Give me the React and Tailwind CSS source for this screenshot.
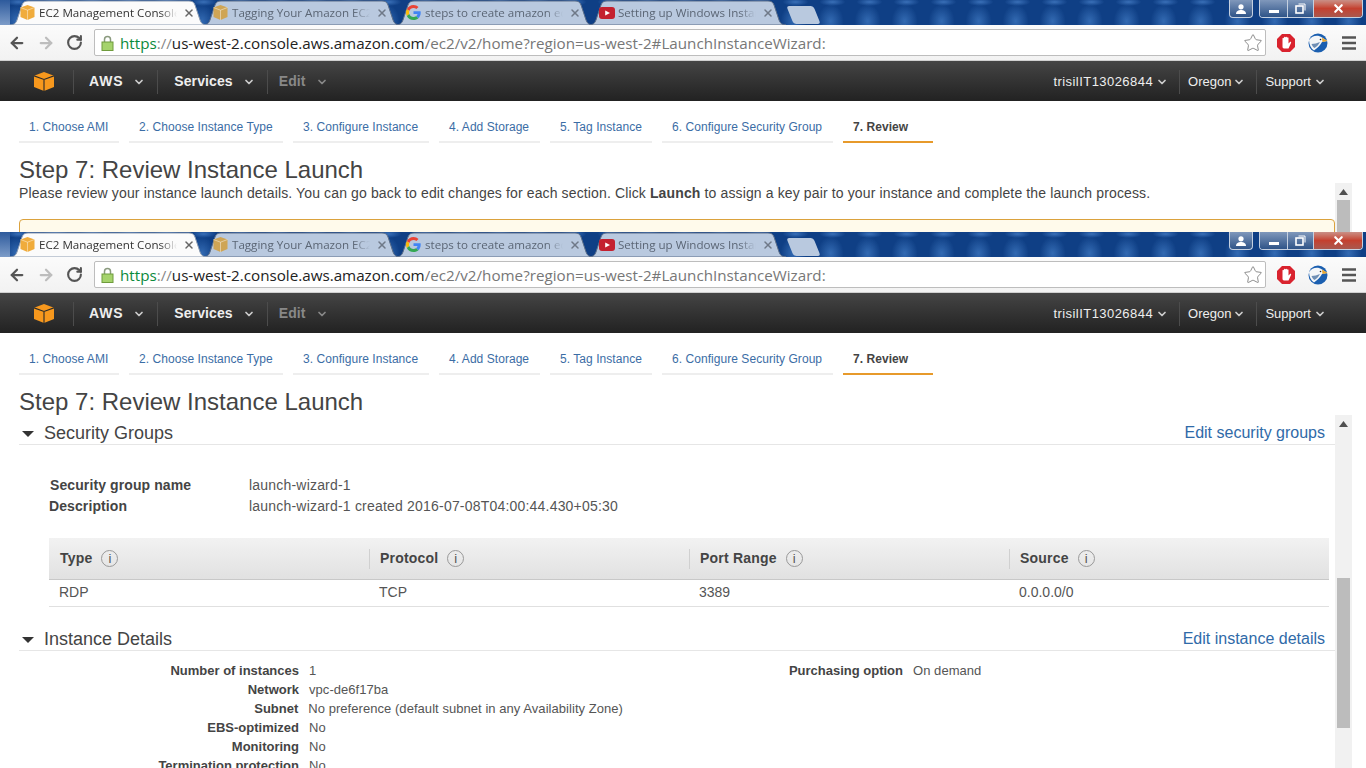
import { ArrowLeft, ArrowRight, RotateCw, Star, ChevronDown, X } from "lucide-react";

const chromeTabs = [
  { title: "EC2 Management Console", icon: "aws", active: true },
  { title: "Tagging Your Amazon EC2 Resources", icon: "aws" },
  { title: "steps to create amazon ec2 instance", icon: "google" },
  { title: "Setting up Windows Instance", icon: "youtube" },
];

const steps = [
  { label: "1. Choose AMI", width: "w-[100px]" },
  { label: "2. Choose Instance Type", width: "w-[154px]" },
  { label: "3. Configure Instance", width: "w-[136px]" },
  { label: "4. Add Storage", width: "w-[101px]" },
  { label: "5. Tag Instance", width: "w-[102px]" },
  { label: "6. Configure Security Group", width: "w-[171px]" },
  { label: "7. Review", width: "w-[90px]", active: true },
];

const details = [
  ["Number of instances", "1"],
  ["Network", "vpc-de6f17ba"],
  ["Subnet", "No preference (default subnet in any Availability Zone)"],
  ["EBS-optimized", "No"],
  ["Monitoring", "No"],
  ["Termination protection", "No"],
];

function AwsFavicon({ muted }) {
  const fill = muted ? "#cfa555" : "#f0ac3c";
  return (
    <svg width="15" height="15" viewBox="0 0 15 15" className="shrink-0">
      <path d="M7.500 0 14.500 2.500V12L7.500 15 .5 12V2.500Z" fill={fill} />
      <path d="M.5 2.500 7.500 5.200 14.500 2.500M7.500 5.200V15" fill="none" stroke="#fff" strokeOpacity="0.55" strokeWidth="0.8" />
    </svg>
  );
}

function GoogleFavicon() {
  return (
    <svg width="15" height="15" viewBox="0 0 48 48" className="shrink-0">
      <path fill="#EA4335" d="M24 9.500c3.500 0 6.700 1.200 9.200 3.600l6.900-6.900C35.900 2.400 30.500 0 24 0 14.600 0 6.500 5.400 2.600 13.200l8 6.200C12.500 13.600 17.800 9.500 24 9.500z" />
      <path fill="#4285F4" d="M47 24.500c0-1.600-.1-3.100-.4-4.500H24v9h12.900c-.6 3-2.200 5.500-4.800 7.200l7.700 6C44.300 37.900 47 31.800 47 24.500z" />
      <path fill="#FBBC05" d="M10.600 28.600c-.5-1.400-.8-3-.8-4.600s.3-3.200.8-4.600l-8-6.200C.9 16.500 0 20.100 0 24s.9 7.500 2.600 10.800l8-6.200z" />
      <path fill="#34A853" d="M24 48c6.500 0 11.900-2.100 15.800-5.800l-7.700-6c-2.100 1.400-4.900 2.300-8.100 2.300-6.200 0-11.500-4.100-13.400-9.900l-8 6.200C6.500 42.600 14.600 48 24 48z" />
    </svg>
  );
}

function YoutubeFavicon() {
  return (
    <svg width="16" height="12" viewBox="0 0 16 12" className="shrink-0">
      <rect width="16" height="12" rx="3" fill="#c4202f" />
      <path d="M6.200 3.500 11 6 6.200 8.500Z" fill="#fff" />
    </svg>
  );
}

function TabShape({ active }) {
  return (
    <svg width="197" height="25" viewBox="0 0 197 25" className="absolute inset-0">
      <path
        d="M0 25C4 25 6 23 7 20L12 5C13 2 15 1 18 1H179C182 1 184 2 185 5L190 20C191 23 193 25 197 25Z"
        fill={active ? "#fbfbfb" : "#b9c9df"}
        stroke={active ? "#8a9ab0" : "#5d6f8a"}
        strokeWidth="1"
      />
    </svg>
  );
}

function ChromeTab({ tab }) {
  return (
    <div className={`relative w-[197px] h-[25px] shrink-0 -mr-[4px] ${tab.active ? "z-10" : ""}`}>
      <TabShape active={tab.active} />
      <div className="relative flex items-center h-full pl-[10px]">
        <div className="w-[19px] flex items-center">
          {tab.icon === "aws" && <AwsFavicon muted={!tab.active} />}
          {tab.icon === "google" && <GoogleFavicon />}
          {tab.icon === "youtube" && <YoutubeFavicon />}
        </div>
        <div
          className={`w-[138px] overflow-hidden whitespace-nowrap font-['Open_Sans',sans-serif] text-[11.6px] [mask-image:linear-gradient(to_right,black_88%,transparent)] ${
            tab.active ? "text-[#333]" : "text-[#5b6675]"
          }`}
        >
          {tab.title}
        </div>
        <X size={12} strokeWidth={3} className={`ml-[6px] ${tab.active ? "text-[#666]" : "text-[#6f7988]"}`} />
      </div>
    </div>
  );
}

function WindowButtons() {
  return (
    <div className="ml-auto flex items-start mr-[3px]">
      <div className="w-[24px] h-[18px] rounded-b-[4px] border border-t-0 border-[#c5d0e0] bg-gradient-to-b from-[#8098bb] to-[#2f5488] flex items-center justify-center">
        <svg width="12" height="10" viewBox="0 0 12 10">
          <circle cx="6" cy="2.800" r="2.600" fill="#fff" />
          <path d="M1 10C1 7 3.500 6 6 6S11 7 11 10Z" fill="#fff" />
        </svg>
      </div>
      <div className="ml-[6px] w-[104px] h-[18px] rounded-b-[4px] border border-t-0 border-[#c5d0e0] flex overflow-hidden">
        <div className="w-[28px] bg-gradient-to-b from-[#8098bb] to-[#2f5488] border-r border-[#c5d0e0] flex items-center justify-center">
          <span className="block w-[10px] h-[3px] mt-[5px] bg-white" />
        </div>
        <div className="w-[26px] bg-gradient-to-b from-[#8098bb] to-[#2f5488] border-r border-[#c5d0e0] flex items-center justify-center">
          <svg width="11" height="11" viewBox="0 0 11 11" fill="none" stroke="#fff">
            <rect x="1" y="3" width="7" height="7" strokeWidth="1.600" />
            <path d="M3.500 1H10V7.500" strokeWidth="1" />
          </svg>
        </div>
        <div className="flex-1 bg-gradient-to-b from-[#c98f86] via-[#c4402f] to-[#a9574e] flex items-center justify-center">
          <X size={13} strokeWidth={4} className="text-white" />
        </div>
      </div>
    </div>
  );
}

function TabStrip() {
  return (
    <div className="h-[25px] flex items-start overflow-hidden bg-[#0f3f85] bg-[radial-gradient(ellipse_13px_4px_at_50%_2px,#3a70b8,transparent),radial-gradient(ellipse_13px_17px_at_45%_85%,#336ab2,transparent)] bg-[length:37px_25px,37px_25px]">
      <div className="w-[10px] h-[25px] shrink-0 bg-gradient-to-b from-[#2d5a9c] to-[#7d9cc8]" />
      {chromeTabs.map((t) => (
        <ChromeTab key={t.title} tab={t} />
      ))}
      <div className="ml-[8px] mt-[6px] w-[27px] h-[18px] shrink-0 bg-[#b9c9df] rounded-[3px] skew-x-[22deg]" />
      <WindowButtons />
    </div>
  );
}

function AdblockIcon() {
  return (
    <svg width="20" height="20" viewBox="0 0 20 20">
      <path d="M6 1H14L19 6V14L14 19H6L1 14V6Z" fill="#d9232e" />
      <path d="M6.500 9V5.500C6.500 4.500 8 4.500 8 5.500V4.500C8 3.500 9.500 3.500 9.500 4.500C9.500 3.500 11 3.500 11 4.500V5C11 4 12.500 4 12.500 5V10.500L14 9C14.700 8.500 15.500 9.200 15 10L12.500 15.500H8C7 15.500 6.500 14.500 6.500 13.500Z" fill="#fff" />
    </svg>
  );
}

function EagleIcon() {
  return (
    <svg width="20" height="20" viewBox="0 0 20 20">
      <circle cx="10" cy="10" r="9.500" fill="#1b5fb0" />
      <path d="M1 7C4 2.500 10 1.500 14 4.500L19.500 8 14 9C12.500 12 9.500 15 6 17.500 3 15.500 1 11.500 1 7Z" fill="#f4f6f8" />
      <path d="M14 4.500 19.500 8 14.500 9Z" fill="#e8a52c" />
      <circle cx="12.500" cy="6.500" r="0.800" fill="#222" />
      <path d="M3.500 11C6.500 11 9 10 12 9 10.500 12 8.500 14 6.500 15 5 14 4 12.500 3.500 11Z" fill="#6f8fb5" />
    </svg>
  );
}

function Toolbar() {
  return (
    <div className="h-[36px] flex items-start bg-gradient-to-b from-[#fbfbfb] to-[#f2f2f2] border-b border-[#d0d0d0]">
      <div className="w-[94px] h-[35px] shrink-0 flex items-center pl-[8px] gap-[11px]">
        <ArrowLeft size={18} strokeWidth={3} className="text-[#555]" />
        <ArrowRight size={18} strokeWidth={3} className="text-[#bdbdbd]" />
        <RotateCw size={17} strokeWidth={3} className="text-[#555]" />
      </div>
      <div className="mt-[4px] w-[1172px] h-[27px] shrink-0 bg-white border border-[#bdbdbd] rounded-[2px] flex items-center pl-[6px] pr-[2px]">
        <svg width="13" height="16" viewBox="0 0 13 16" className="shrink-0">
          <path d="M3.500 7V4.500a3 3 0 0 1 6 0V7" fill="none" stroke="#8a9a7e" strokeWidth="1.500" />
          <rect x="1" y="7" width="11" height="8.500" fill="#a5d36c" stroke="#6f9b3c" />
        </svg>
        <div className="ml-[6px] whitespace-nowrap text-[15.2px] leading-[20px] font-['Open_Sans',sans-serif]">
          <span className="text-[#0a8a3c]">https</span>
          <span className="text-[#888]">://</span>
          <span className="text-[#222]">us-west-2.console.aws.amazon.com</span>
          <span className="text-[#777]">/ec2/v2/home?region=us-west-2#LaunchInstanceWizard:</span>
        </div>
        <Star size={20} strokeWidth={1} className="ml-auto text-[#777]" />
      </div>
      <div className="flex-1 h-[35px] flex items-center pl-[10px]">
        <AdblockIcon />
        <div className="ml-[12px]">
          <EagleIcon />
        </div>
        <svg width="14" height="14" viewBox="0 0 14 14" className="ml-[14px]">
          <path d="M0 1.500H14M0 7H14M0 12.500H14" stroke="#555" strokeWidth="2.600" />
        </svg>
      </div>
    </div>
  );
}

function Caret({ className }) {
  return <ChevronDown size={12} strokeWidth={3.500} className={className} />;
}

function AwsNav() {
  const divider = <span className="block w-px h-[24px] bg-[#4c4c4c]" />;
  return (
    <div className="h-[40px] pt-[1px] flex items-center bg-gradient-to-b from-[#454545] to-[#222] text-[#eee]">
      <svg width="20" height="19" viewBox="0 0 20 19" className="ml-[34px]">
        <path d="M10 0 20 3.800V15L10 19 0 15V3.800Z" fill="#f7981d" />
        <path d="M0 3.800 10 7.500 20 3.800M10 7.500V19" fill="none" stroke="#2b2b2b" strokeWidth="1.100" />
      </svg>
      <span className="ml-[19px]">{divider}</span>
      <span className="ml-[15px] text-[14px] font-bold tracking-[0.8px]">AWS</span>
      <Caret className="ml-[10px] text-[#ccc]" />
      <span className="ml-[12px]">{divider}</span>
      <span className="ml-[16px] text-[14px] font-bold tracking-[0.1px]">Services</span>
      <Caret className="ml-[10px] text-[#ccc]" />
      <span className="ml-[12px]">{divider}</span>
      <span className="ml-[11px] text-[14px] font-bold text-[#888] tracking-[0.1px]">Edit</span>
      <Caret className="ml-[10px] text-[#888]" />
      <span className="ml-auto text-[13px] tracking-[0.45px]">trisilIT13026844</span>
      <Caret className="ml-[3px] text-[#ccc]" />
      <span className="ml-[11px]">{divider}</span>
      <span className="ml-[8px] text-[13px]">Oregon</span>
      <Caret className="ml-[2px] text-[#ccc]" />
      <span className="ml-[11px]">{divider}</span>
      <span className="ml-[8px] text-[13px]">Support</span>
      <Caret className="ml-[3px] mr-[40px] text-[#ccc]" />
    </div>
  );
}

function WizardTabs() {
  return (
    <div className="h-[42px] flex items-end pl-[19px] gap-[10px]">
      {steps.map((s) => (
        <div
          key={s.label}
          className={`${s.width} h-[30px] pl-[10px] border-b-2 text-[12px] leading-[28px] tracking-[0.05px] whitespace-nowrap ${
            s.active ? "border-[#e79a2b] font-bold text-[#444]" : "border-[#eee] text-[#3b6da5]"
          }`}
        >
          {s.label}
        </div>
      ))}
    </div>
  );
}

function Heading() {
  return <h1 className="mt-[14px] ml-[19px] text-[24px] leading-[26px] text-[#444]">Step 7: Review Instance Launch</h1>;
}

function Scrollbar({ offset, thumb }) {
  return (
    <div className="relative w-[17px] shrink-0 bg-[#f1f1f1] h-full">
      <svg width="9" height="6" viewBox="0 0 9 6" className="absolute left-[4px] top-[6px]">
        <path d="M0 6 4.500 0 9 6Z" fill="#505050" />
      </svg>
      <div className={`absolute left-[2px] w-[13px] bg-[#bcbcbc] ${offset} ${thumb}`} />
    </div>
  );
}

function SectionHeader({ title, link }) {
  return (
    <div className="h-[30px] pt-[8px] flex items-center border-b border-[#e6e6e6]">
      <svg width="12" height="6" viewBox="0 0 12 6" className="ml-[3px]">
        <path d="M0 0H12L6 6Z" fill="#333" />
      </svg>
      <span className="ml-[10px] text-[18px] text-[#444]">{title}</span>
      <a className="ml-auto mr-[10px] -mt-[2px] text-[16px] text-[#2f6aa8]">{link}</a>
    </div>
  );
}

function InfoIcon() {
  return (
    <span className="ml-[9px] w-[17px] h-[17px] rounded-full border border-[#999] flex items-center justify-center text-[13px] font-normal text-[#555]">
      i
    </span>
  );
}

function SecurityTable() {
  const heads = ["Type", "Protocol", "Port Range", "Source"];
  const row = ["RDP", "TCP", "3389", "0.0.0.0/0"];
  return (
    <div className="ml-[30px] mr-[6px] mt-[21px] text-[14px]">
      <div className="h-[42px] grid grid-cols-4 items-center bg-gradient-to-b from-[#f2f2f2] to-[#e1e1e1] border-b border-[#c8c8c8]">
        {heads.map((h, i) => (
          <div
            key={h}
            className={`h-[20px] flex items-center font-bold tracking-[0.2px] text-[#444] ${
              i > 0 ? "border-l border-[#d0d0d0] pl-[10px]" : "pl-[11px]"
            }`}
          >
            {h}
            <InfoIcon />
          </div>
        ))}
      </div>
      <div className="h-[27px] pb-[2px] grid grid-cols-4 items-center border-b border-[#e0e0e0] text-[#555]">
        {row.map((c) => (
          <div key={c} className="pl-[10px]">
            {c}
          </div>
        ))}
      </div>
    </div>
  );
}

function DetailRow({ label, value }) {
  return (
    <div className="flex h-[19px] leading-[19px] text-[13px]">
      <span className="w-[280px] text-right font-bold text-[#444] whitespace-nowrap">{label}</span>
      <span className="ml-[10px] text-[#555] whitespace-nowrap tracking-[0.05px]">{value}</span>
    </div>
  );
}

function TopWindow() {
  return (
    <div className="h-[232px] overflow-hidden">
      <TabStrip />
      <Toolbar />
      <AwsNav />
      <WizardTabs />
      <Heading />
      <div className="flex h-[49px] mr-[14px]">
        <div className="flex-1 min-w-0 pl-[19px]">
          <p className="text-[14px] leading-[20px] tracking-[0.13px] text-[#444]">
            Please review your instance launch details. You can go back to edit changes for each section. Click{" "}
            <b>Launch</b> to assign a key pair to your instance and complete the launch process.
          </p>
          <div className="mt-[16px] h-[40px] rounded-t-[4px] border border-[#dba23d] bg-[#fffaeb]" />
        </div>
        <Scrollbar offset="top-[17px]" thumb="h-[60px]" />
      </div>
    </div>
  );
}

function BottomWindow() {
  return (
    <div className="h-[536px] flex flex-col overflow-hidden">
      <TabStrip />
      <Toolbar />
      <AwsNav />
      <WizardTabs />
      <Heading />
      <div className="flex-1 min-h-0 flex mr-[14px]">
        <div className="flex-1 min-w-0 pl-[19px]">
          <SectionHeader title="Security Groups" link="Edit security groups" />
          <div className="mt-[30px] ml-[30px] text-[14px] leading-[21px] tracking-[0.1px]">
            <div className="flex pl-[1px]">
              <b className="w-[199px] text-[#444]">Security group name</b>
              <span className="text-[#555] tracking-[0.2px]">launch-wizard-1</span>
            </div>
            <div className="flex">
              <b className="w-[200px] text-[#444]">Description</b>
              <span className="text-[#555] tracking-[0.2px]">launch-wizard-1 created 2016-07-08T04:00:44.430+05:30</span>
            </div>
          </div>
          <SecurityTable />
          <div className="mt-[14px]">
            <SectionHeader title="Instance Details" link="Edit instance details" />
          </div>
          <div className="mt-[10px] flex">
            <div className="w-[604px] shrink-0">
              {details.map(([l, v]) => (
                <DetailRow key={l} label={l} value={v} />
              ))}
            </div>
            <DetailRow label="Purchasing option" value="On demand" />
          </div>
        </div>
        <Scrollbar offset="top-[163px]" thumb="h-[150px]" />
      </div>
    </div>
  );
}

export default function App() {
  return (
    <div className="w-[1366px] h-[768px] overflow-hidden bg-white font-['Liberation_Sans',Arial,sans-serif]">
      <TopWindow />
      <BottomWindow />
    </div>
  );
}
